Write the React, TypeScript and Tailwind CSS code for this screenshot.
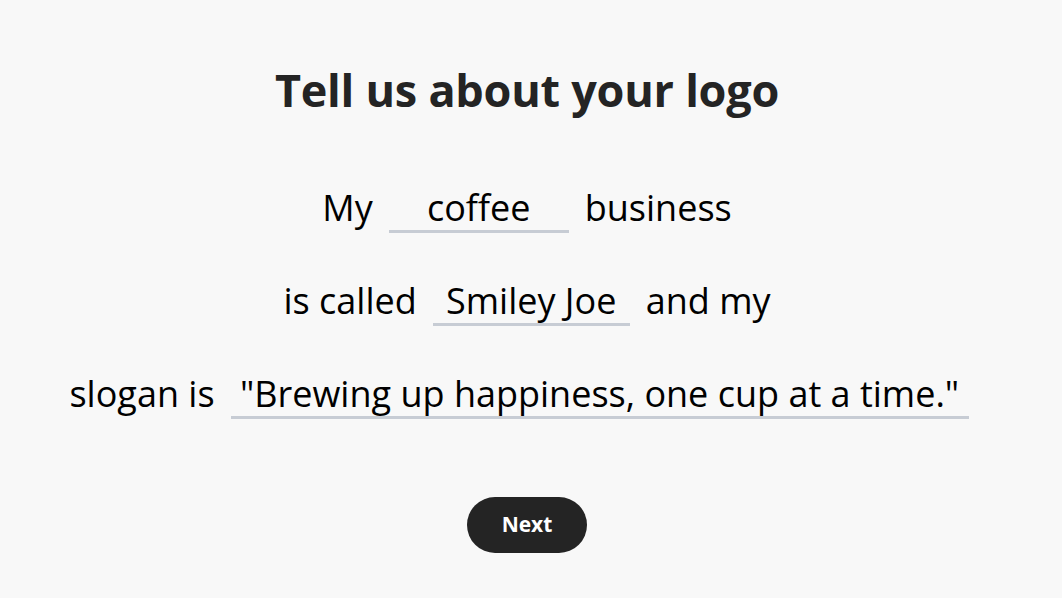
const font = { fontFamily: "'Open Sans', Lato, sans-serif" };

function Field({ value, width }: { value: string; width: string }) {
  return (
    <span
      className={`inline-block ${width} whitespace-nowrap border-b-[3px] border-[#c7ccd4] text-center leading-[44px] text-black`}
    >
      {value}
    </span>
  );
}

export default function App() {
  return (
    <div
      className="min-h-screen w-full bg-[#f8f8f8] flex flex-col items-center pt-[60px] pr-[8px]"
      style={font}
    >
      <h1 className="text-[45px] font-bold leading-[60px] text-[#242424] tracking-[-0.25px]">
        Tell us about your logo
      </h1>

      <div className="mt-[64px] flex flex-col items-center gap-[44px] text-[36px] leading-[48px] text-black">
        <div className="flex items-baseline gap-[16px] whitespace-nowrap">
          <span>My</span>
          <Field value="coffee" width="w-[180px]" />
          <span>business</span>
        </div>
        <div className="flex items-baseline gap-[16px] whitespace-nowrap">
          <span>is called</span>
          <Field value="Smiley Joe" width="w-[197px]" />
          <span>and my</span>
        </div>
        <div className="flex items-baseline gap-[16px] whitespace-nowrap pr-[16px]">
          <span>slogan is</span>
          <Field
            value={'"Brewing up happiness, one cup at a time."'}
            width="w-[738px]"
          />
        </div>
      </div>

      <button className="mt-[78px] h-[56px] w-[120px] rounded-full bg-[#242424] text-[21px] font-bold text-white">
        Next
      </button>
    </div>
  );
}
